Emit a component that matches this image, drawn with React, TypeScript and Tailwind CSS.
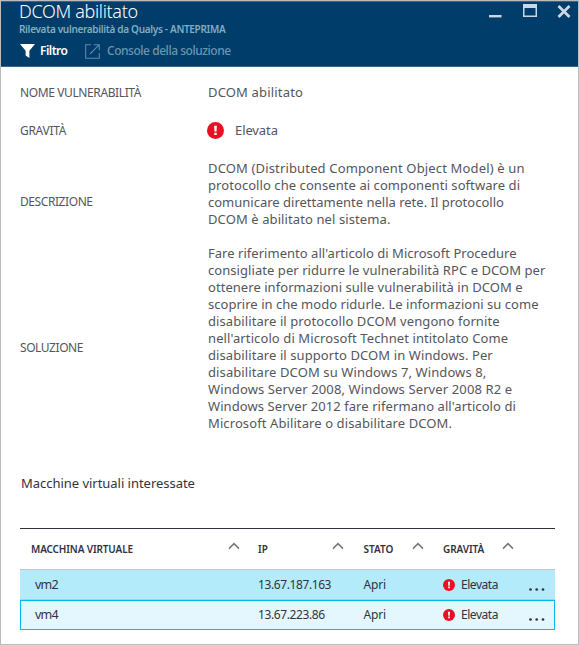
import type { ReactNode } from "react";

type Line = { text: string; tracking: string };

const description: Line[] = [
  { text: "DCOM (Distributed Component Object Model) è un", tracking: "tracking-[0.15px]" },
  { text: "protocollo che consente ai componenti software di", tracking: "tracking-[0.07px]" },
  { text: "comunicare direttamente nella rete. Il protocollo", tracking: "tracking-normal" },
  { text: "DCOM è abilitato nel sistema.", tracking: "tracking-[0.1px]" },
];

const solution: Line[] = [
  { text: "Fare riferimento all'articolo di Microsoft Procedure", tracking: "tracking-[0.03px]" },
  { text: "consigliate per ridurre le vulnerabilità RPC e DCOM per", tracking: "tracking-[0.06px]" },
  { text: "ottenere informazioni sulle vulnerabilità in DCOM e", tracking: "tracking-[0.05px]" },
  { text: "scoprire in che modo ridurle. Le informazioni su come", tracking: "tracking-[0.03px]" },
  { text: "disabilitare il protocollo DCOM vengono fornite", tracking: "tracking-[0.09px]" },
  { text: "nell'articolo di Microsoft Technet intitolato Come", tracking: "tracking-[0.1px]" },
  { text: "disabilitare il supporto DCOM in Windows. Per", tracking: "tracking-[0.09px]" },
  { text: "disabilitare DCOM su Windows 7, Windows 8,", tracking: "tracking-[0.1px]" },
  { text: "Windows Server 2008, Windows Server 2008 R2 e", tracking: "tracking-[0.12px]" },
  { text: "Windows Server 2012 fare rifermano all'articolo di", tracking: "tracking-[0.08px]" },
  { text: "Microsoft Abilitare o disabilitare DCOM.", tracking: "tracking-[0.1px]" },
];

function Alert({ className }: { className: string }) {
  return (
    <svg viewBox="0 0 17 17" className={`shrink-0 ${className}`}>
      <circle cx="8.5" cy="8.5" r="8.5" fill="#e81123" />
      <path d="M7.1 3.8h2.8l-.4 5.6H7.5z M7.3 10.7h2.4v2.4H7.3z" fill="#fff" />
    </svg>
  );
}

function Caret() {
  return (
    <svg viewBox="0 0 12 8" className="mb-[6px] h-2 w-3 shrink-0" fill="none" stroke="#77777c" strokeWidth="1.5">
      <path d="M1 6.6 6 1.6 11 6.6" />
    </svg>
  );
}

function Property({ label, labelClass, children, className }: { label: string; labelClass: string; children: ReactNode; className: string }) {
  return (
    <div className={`flex text-[#55565c] ${className}`}>
      <div className={`w-[188px] shrink-0 text-[12px] leading-[17px] whitespace-nowrap ${labelClass}`}>{label}</div>
      {children}
    </div>
  );
}

function Lines({ lines }: { lines: Line[] }) {
  return (
    <div className="text-[13px] leading-[17px] whitespace-nowrap">
      {lines.map((line) => (
        <div key={line.text}><span className={line.tracking}>{line.text}</span></div>
      ))}
    </div>
  );
}

function Row({ name, ip, ipClass, className }: { name: string; ip: string; ipClass: string; className: string }) {
  return (
    <div className={`flex items-center text-[12px] leading-4 text-[#32323f] ${className}`}>
      <div className="w-[223px] text-[12.5px] tracking-[-0.8px]">{name}</div>
      <div className={`w-[105px] tracking-[-0.4px] ${ipClass}`}>{ip}</div>
      <div className="w-[80px] pl-[0.5px] tracking-[-0.2px]">Apri</div>
      <div className="flex w-[86px] items-center gap-[6px]">
        <Alert className="h-3 w-3" />
        <span className={`tracking-[-0.45px] ${ipClass}`}>Elevata</span>
      </div>
      <svg viewBox="0 0 16 3" className="mt-[9px] h-[3px] w-4" fill="#32323f">
        <circle cx="1.5" cy="1.5" r="1.35" />
        <circle cx="7.7" cy="1.5" r="1.35" />
        <circle cx="14" cy="1.5" r="1.35" />
      </svg>
    </div>
  );
}

export default function App() {
  return (
    <div className="h-[645px] w-[579px] border border-[#bcbcbc] bg-white font-['Noto_Sans',sans-serif]">
      <header className="flex h-[66px] justify-between border-t border-b border-[#386689] bg-[#003d6b]">
        <div className="pl-[18px] whitespace-nowrap">
          <h1 className="-mt-px h-[21px] text-[18px] leading-[20px] font-light tracking-[-0.33px] text-white">DCOM abilitato</h1>
          <p className="h-[17px] text-[10px] leading-[15px] font-semibold tracking-[-0.32px] text-[#80adbf]">Rilevata vulnerabilità da Qualys - ANTEPRIMA</p>
          <div className="flex h-[24px] items-center text-[12px] leading-4">
            <svg viewBox="0 0 16 14" className="ml-px h-[14px] w-[15px]" preserveAspectRatio="none" fill="#fff">
              <path d="M0 0h16L10 6.7V14L6 11.6V6.7z" />
            </svg>
            <span className="ml-[5px] w-[45px] font-semibold tracking-[-0.5px] text-white">Filtro</span>
            <svg viewBox="0 0 15 15" className="h-[15px] w-[15px]" fill="none" stroke="#6088a6" strokeWidth="1.1">
              <path d="M6 .7H.7v13.6h13.6V9M8.7.7h5.6v5.6M14.3.7 5 10" />
            </svg>
            <span className="ml-[7px] font-medium tracking-[-0.46px] text-[#6f94ae]">Console della soluzione</span>
          </div>
        </div>
        <svg viewBox="0 0 84 16" className="mt-[2px] mr-[7px] h-4 w-[84px]" fill="none" stroke="#ccd8e1">
          <path d="M2 12.2h12.5" strokeWidth="2.4" />
          <path d="M36 2h14" strokeWidth="4" />
          <path d="M36.75 4v8.2h12.5V4" strokeWidth="1.5" />
          <path d="m71.5 2 11 11M82.5 2l-11 11" strokeWidth="2.7" />
        </svg>
      </header>
      <main className="px-[19px] pt-[17px]">
        <Property label="NOME VULNERABILITÀ" labelClass="tracking-[-0.39px]" className="h-[38px]">
          <Lines lines={[{ text: "DCOM abilitato", tracking: "tracking-[0.17px]" }]} />
        </Property>
        <Property label="GRAVITÀ" labelClass="tracking-[-0.3px]" className="h-[38px]">
          <Alert className="-ml-px h-[17px] w-[17px]" />
          <div className="ml-[11px]"><Lines lines={[{ text: "Elevata", tracking: "tracking-[-0.1px]" }]} /></div>
        </Property>
        <Property label="DESCRIZIONE" labelClass="mt-[33px] tracking-[-0.42px]" className="h-[85px]">
          <Lines lines={description} />
        </Property>
        <Property label="SOLUZIONE" labelClass="mt-[94px] tracking-[-0.45px]" className="h-[187px]">
          <Lines lines={solution} />
        </Property>
        <h2 className="mt-[42px] h-[54px] pl-px text-[13px] leading-[18px] text-[#32323f]"><span className="tracking-[-0.03px]">Macchine virtuali interessate</span></h2>
        <section className="w-[535px] border-t border-[#32323f]">
          <div className="flex h-[40px] items-center pl-[11px] text-[10px] leading-4 font-semibold text-[#32323f]">
            <div className="w-[197px] tracking-[-0.13px]">MACCHINA VIRTUALE</div>
            <Caret />
            <div className="ml-[18px] w-[74px]">IP</div>
            <Caret />
            <div className="ml-[19px] w-[49px] pl-[0.5px]">STATO</div>
            <Caret />
            <div className="ml-[19px] w-[59px] tracking-[-0.1px]">GRAVITÀ</div>
            <Caret />
          </div>
          <Row name="vm2" ip="13.67.187.163" ipClass="" className="h-[31px] border-y border-[#bfc9cc] bg-[#b3ebfb] pl-[15px]" />
          <Row name="vm4" ip="13.67.223.86" ipClass="-mt-px" className="h-[30px] border border-[#00b9ee] bg-[#e5f7fe] pl-[14px]" />
        </section>
      </main>
    </div>
  );
}
